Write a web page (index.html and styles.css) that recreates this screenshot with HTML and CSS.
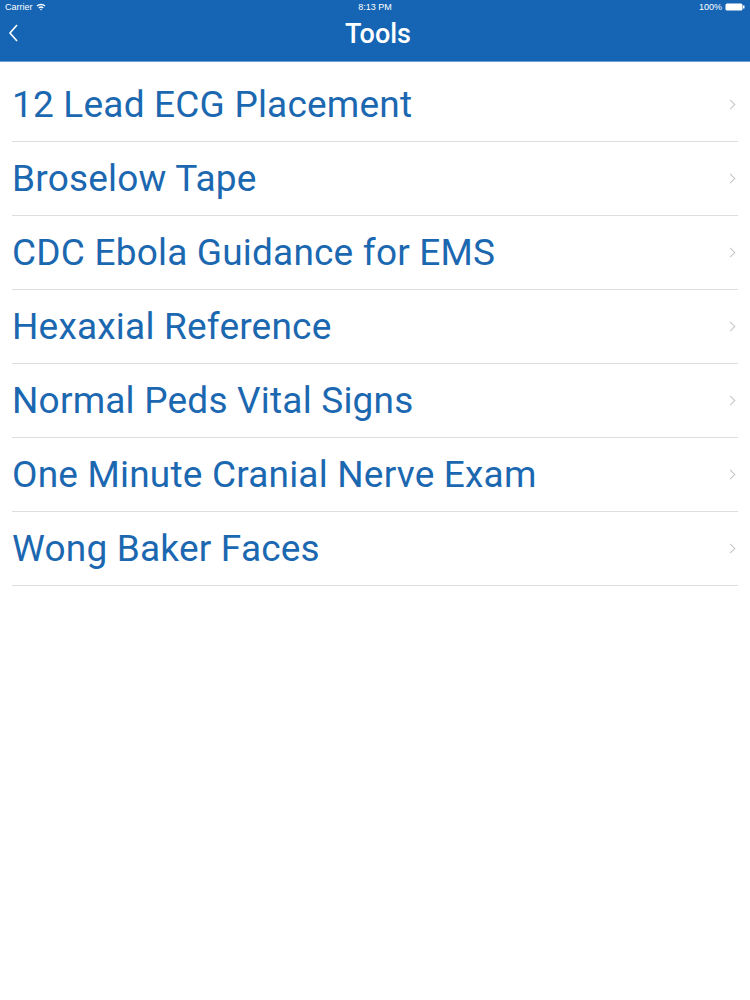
FILE: index.html
```html
<!doctype html>
<html lang="en">
<head>
	<meta charset="UTF-8">
	<title>Tools</title>
	<link rel="stylesheet" href="styles.css">
</head>
<body>
	<div class="header">
		<div class="status">
			<div class="carrier">Carrier
				<svg width="10" height="8" viewBox="0 0 10 8"><path d="M0.5 2.6 A6.5 6.5 0 0 1 9.5 2.6 L8.5 3.6 A5 5 0 0 0 1.5 3.6Z M2.3 4.4 A4 4 0 0 1 7.7 4.4 L6.7 5.4 A2.6 2.6 0 0 0 3.3 5.4Z M4 6.2 A1.4 1.4 0 0 1 6 6.2 L5 7.4Z" fill="#fff"/></svg>
			</div>
			<div class="time">8:13 PM</div>
			<div class="battery">100%
				<svg width="20" height="8" viewBox="0 0 20 8"><rect x="0.5" y="0.5" width="17" height="7" rx="1.5" fill="#fff"/><rect x="18" y="2.5" width="1.5" height="3" fill="#fff"/></svg>
			</div>
		</div>
		<div class="nav">
			<svg class="back" width="12" height="20" viewBox="0 0 12 20"><path d="M10 2 L3 10 L10 18" fill="none" stroke="#fff" stroke-width="1.6"/></svg>
			<h1>Tools</h1>
		</div>
	</div>
	<ul class="list">
		<li>12 Lead ECG Placement</li>
		<li>Broselow Tape</li>
		<li>CDC Ebola Guidance for EMS</li>
		<li>Hexaxial Reference</li>
		<li>Normal Peds Vital Signs</li>
		<li>One Minute Cranial Nerve Exam</li>
		<li>Wong Baker Faces</li>
	</ul>
</body>
</html>
```

FILE: styles.css
```css
body { margin:0; background:#fff; font-family:Roboto, "Liberation Sans", sans-serif; }
.header { background:#1565b4; height:61px; border-bottom:1px solid #6f9ed2; color:#fff; }
.status { display:flex; justify-content:space-between; align-items:center; height:14px; padding:0 5px; font-size:9px; font-family:"Liberation Sans", sans-serif; }
.carrier, .battery { flex:1; display:flex; align-items:center; gap:3px; }
.battery { justify-content:flex-end; }
.time { flex:1; text-align:center; }
.nav { position:relative; height:40px; display:flex; align-items:center; justify-content:center; }
.nav h1 { margin:0; font-size:27px; font-weight:500; padding-left:6px; }
.back { position:absolute; left:7px; top:9px; }
.list { list-style:none; margin:0; padding:6px 12px 0; }
.list li { height:73px; line-height:73px; border-bottom:1px solid #dedede; color:#1b68b1; font-size:37px; letter-spacing:0.2px; position:relative; }
.list li::after { content:""; position:absolute; right:4px; top:33px; width:6px; height:6px; border-top:1.3px solid #c4c4c4; border-right:1.3px solid #c4c4c4; transform:rotate(45deg); }
```
